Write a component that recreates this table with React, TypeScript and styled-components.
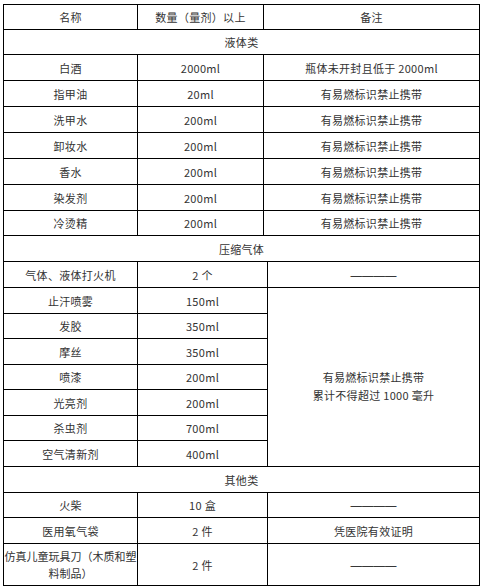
import styled, { createGlobalStyle } from "styled-components";

type Row = { name: string; amount: string; note?: string };

const liquids: Row[] = [
  { name: "白酒", amount: "2000ml", note: "瓶体未开封且低于 2000ml" },
  { name: "指甲油", amount: "20ml", note: "有易燃标识禁止携带" },
  { name: "洗甲水", amount: "200ml", note: "有易燃标识禁止携带" },
  { name: "卸妆水", amount: "200ml", note: "有易燃标识禁止携带" },
  { name: "香水", amount: "200ml", note: "有易燃标识禁止携带" },
  { name: "染发剂", amount: "200ml", note: "有易燃标识禁止携带" },
  { name: "冷烫精", amount: "200ml", note: "有易燃标识禁止携带" },
];

const gases: Row[] = [
  { name: "止汗喷雾", amount: "150ml" },
  { name: "发胶", amount: "350ml" },
  { name: "摩丝", amount: "350ml" },
  { name: "喷漆", amount: "200ml" },
  { name: "光亮剂", amount: "200ml" },
  { name: "杀虫剂", amount: "700ml" },
  { name: "空气清新剂", amount: "400ml" },
];

export default function App() {
  return (
    <>
      <GlobalStyle />
      <Page>
        <Table>
          <Section
            $cols="134px 126px 1fr"
            $rows="25px 25px 26px 26px 26px 26px 26px 26px 25px"
          >
            <Cell>名称</Cell>
            <Cell>数量（量剂）以上</Cell>
            <Cell>备注</Cell>
            <Cell $col="1 / -1">液体类</Cell>
            {liquids.map((r) => (
              <>
                <Cell key={r.name}>{r.name}</Cell>
                <Cell>{r.amount}</Cell>
                <Cell>{r.note}</Cell>
              </>
            ))}
          </Section>

          <Section
            $cols="134px 130px 1fr"
            $rows="26px 26px 26px 25px 26px 25px 26px 25px 26px"
          >
            <Cell $col="1 / -1">压缩气体</Cell>
            <Cell>气体、液体打火机</Cell>
            <Cell>2 个</Cell>
            <Cell>
              <Dash>————</Dash>
            </Cell>
            {gases.map((r) => (
              <>
                <Cell key={r.name}>{r.name}</Cell>
                <Cell>{r.amount}</Cell>
              </>
            ))}
            <MergedCell>
              <span>有易燃标识禁止携带</span>
              <span>累计不得超过 1000 毫升</span>
            </MergedCell>
          </Section>

          <Section $cols="134px 130px 1fr" $rows="26px 25px 26px 42px">
            <Cell $col="1 / -1">其他类</Cell>
            <Cell>火柴</Cell>
            <Cell>10 盒</Cell>
            <Cell>
              <Dash>————</Dash>
            </Cell>
            <Cell>医用氧气袋</Cell>
            <Cell>2 件</Cell>
            <Cell>凭医院有效证明</Cell>
            <WrapCell>
              <span>仿真儿童玩具刀（木质和塑</span>
              <span>料制品）</span>
            </WrapCell>
            <Cell>2 件</Cell>
            <Cell>
              <Dash>————</Dash>
            </Cell>
          </Section>
        </Table>
      </Page>
    </>
  );
}

const GlobalStyle = createGlobalStyle`
  html, body {
    margin: 0;
    background: #fff;
  }
  body {
    font-family: "Noto Sans CJK SC", "Liberation Sans", sans-serif;
  }
`;

const Page = styled.div`
  padding: 4px 0 0 3px;
`;

const Table = styled.div`
  width: 477px;
  box-sizing: border-box;
  border-left: 1px solid #000;
  border-top: 1px solid #000;
  display: flex;
  flex-direction: column;
`;

const Section = styled.div<{ $cols: string; $rows: string }>`
  display: grid;
  grid-template-columns: ${({ $cols }) => $cols};
  grid-template-rows: ${({ $rows }) => $rows};
`;

const Cell = styled.div<{ $col?: string }>`
  box-sizing: border-box;
  border-right: 1px solid #000;
  border-bottom: 1px solid #000;
  display: flex;
  align-items: center;
  justify-content: center;
  font-size: 11px;
  line-height: 14px;
  letter-spacing: 0.3px;
  color: #333;
  white-space: nowrap;
  ${({ $col }) => ($col ? `grid-column: ${$col};` : "")}
`;

const MergedCell = styled(Cell)`
  grid-column: 3;
  grid-row: 3 / span 7;
  flex-direction: column;
  gap: 4px;
  padding-top: 18px;
`;

const WrapCell = styled(Cell)`
  flex-direction: column;
  gap: 2px;
  letter-spacing: 0;
  line-height: 15px;
`;

const Dash = styled.span`
  font-family: "Liberation Sans", sans-serif;
  font-size: 11.5px;
  letter-spacing: 0;
  color: #000;
`;
